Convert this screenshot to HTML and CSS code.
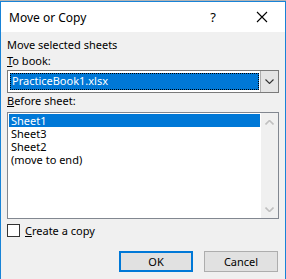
FILE: index.html
```html
<!DOCTYPE html>
<html lang="en">
  <head>
    <meta charset="UTF-8" />
    <title>Move or Copy</title>
    <link rel="stylesheet" href="styles.css">
  </head>
  <body>
    <div class="backdrop"></div>
    <div class="window">
      <div class="titlebar">
        <span class="title">Move or Copy</span>
        <span class="help">?</span>
        <svg class="close" width="12" height="12" viewBox="0 0 12 12">
          <path d="M1 1 L11 11 M11 1 L1 11" stroke="#000" stroke-width="1.1" />
        </svg>
      </div>
      <div class="content">
        <div class="label">Move selected sheets</div>
        <div class="label"><u>T</u>o book:</div>
        <div class="combo">
          <div class="combo-value"><span>PracticeBook1.xlsx</span></div>
          <div class="combo-btn">
            <svg width="9" height="5" viewBox="0 0 9 5">
              <path d="M0.5 0.5 L4.5 4.5 L8.5 0.5" fill="none" stroke="#333" stroke-width="1.1" />
            </svg>
          </div>
        </div>
        <div class="label label-before"><u>B</u>efore sheet:</div>
        <div class="listbox">
          <ul class="items">
            <li class="selected">Sheet1</li>
            <li>Sheet3</li>
            <li>Sheet2</li>
            <li>(move to end)</li>
          </ul>
          <div class="scrollbar">
            <svg width="9" height="5" viewBox="0 0 9 5">
              <path d="M0.5 4.5 L4.5 0.5 L8.5 4.5" fill="none" stroke="#c0c0c0" stroke-width="1.6" />
            </svg>
            <svg width="9" height="5" viewBox="0 0 9 5">
              <path d="M0.5 0.5 L4.5 4.5 L8.5 0.5" fill="none" stroke="#c0c0c0" stroke-width="1.6" />
            </svg>
          </div>
        </div>
        <label class="check">
          <span class="box"></span>
          <span><u>C</u>reate a copy</span>
        </label>
        <div class="buttons">
          <button class="btn btn-default">OK</button>
          <button class="btn">Cancel</button>
        </div>
      </div>
    </div>
  </body>
</html>
```

FILE: styles.css
```css
body {
  margin: 0;
  padding: 0;
  width: 286px;
  height: 279px;
  overflow: hidden;
  font-family: "Noto Sans", "Open Sans", sans-serif;
  font-size: 11px;
  color: #000;
  background: #f0f0f0;
}
.backdrop {
  height: 1px;
  background: #b4b4b4;
}
.window {
  height: 278px;
  box-sizing: border-box;
  border: 1px solid #1883d7;
  border-bottom: none;
  background: #f0f0f0;
}
.titlebar {
  height: 30px;
  background: #fff;
  display: flex;
  align-items: center;
  padding-left: 8px;
}
.title {
  flex: 1;
  font-size: 12px;
}
.help {
  font-size: 13px;
  margin-right: 40px;
}
.close {
  margin-right: 17px;
}
.content {
  padding: 5px 6px 0 6px;
}
.label {
  line-height: 16px;
  height: 16px;
}
.label-before {
  margin-bottom: 3px;
}
.combo {
  display: flex;
  height: 23px;
  margin-top: 1px;
  box-sizing: border-box;
  border: 1px solid #7a7a7a;
  background: #fff;
}
.combo-value {
  flex: 1;
  padding: 2px 1px 2px 2px;
}
.combo-value span {
  display: block;
  height: 17px;
  line-height: 16px;
  box-sizing: border-box;
  padding-left: 2px;
  background: #0078d7;
  color: #fff;
  outline: 1px dotted #000;
  outline-offset: -1px;
}
.combo-btn {
  width: 17px;
  background: #e5e5e5;
  border-left: 1px solid #adadad;
  display: flex;
  align-items: center;
  justify-content: center;
}
.listbox {
  display: flex;
  height: 107px;
  box-sizing: border-box;
  border: 1px solid #828790;
  background: #fff;
}
.items {
  flex: 1;
  list-style: none;
  margin: 0;
  padding: 1px 1px 0 1px;
}
.items li {
  height: 13px;
  line-height: 13px;
  padding-left: 2px;
}
.items li.selected {
  background: #0078d7;
  color: #fff;
}
.scrollbar {
  width: 17px;
  background: #f0f0f0;
  display: flex;
  flex-direction: column;
  justify-content: space-between;
  align-items: center;
  padding: 7px 0 6px;
  box-sizing: border-box;
}
.check {
  display: flex;
  align-items: center;
  gap: 5px;
  margin-top: 5px;
  height: 13px;
}
.box {
  width: 13px;
  height: 13px;
  box-sizing: border-box;
  border: 1px solid #333;
  background: #fff;
}
.buttons {
  display: flex;
  justify-content: flex-end;
  gap: 11px;
  margin-top: 14px;
  margin-right: 1px;
}
.btn {
  width: 74px;
  height: 21px;
  box-sizing: border-box;
  border: 1px solid #adadad;
  background: #e1e1e1;
  font-family: inherit;
  font-size: 11px;
  padding: 0;
  color: #000;
}
.btn-default {
  border: 2px solid #0078d7;
}
```
